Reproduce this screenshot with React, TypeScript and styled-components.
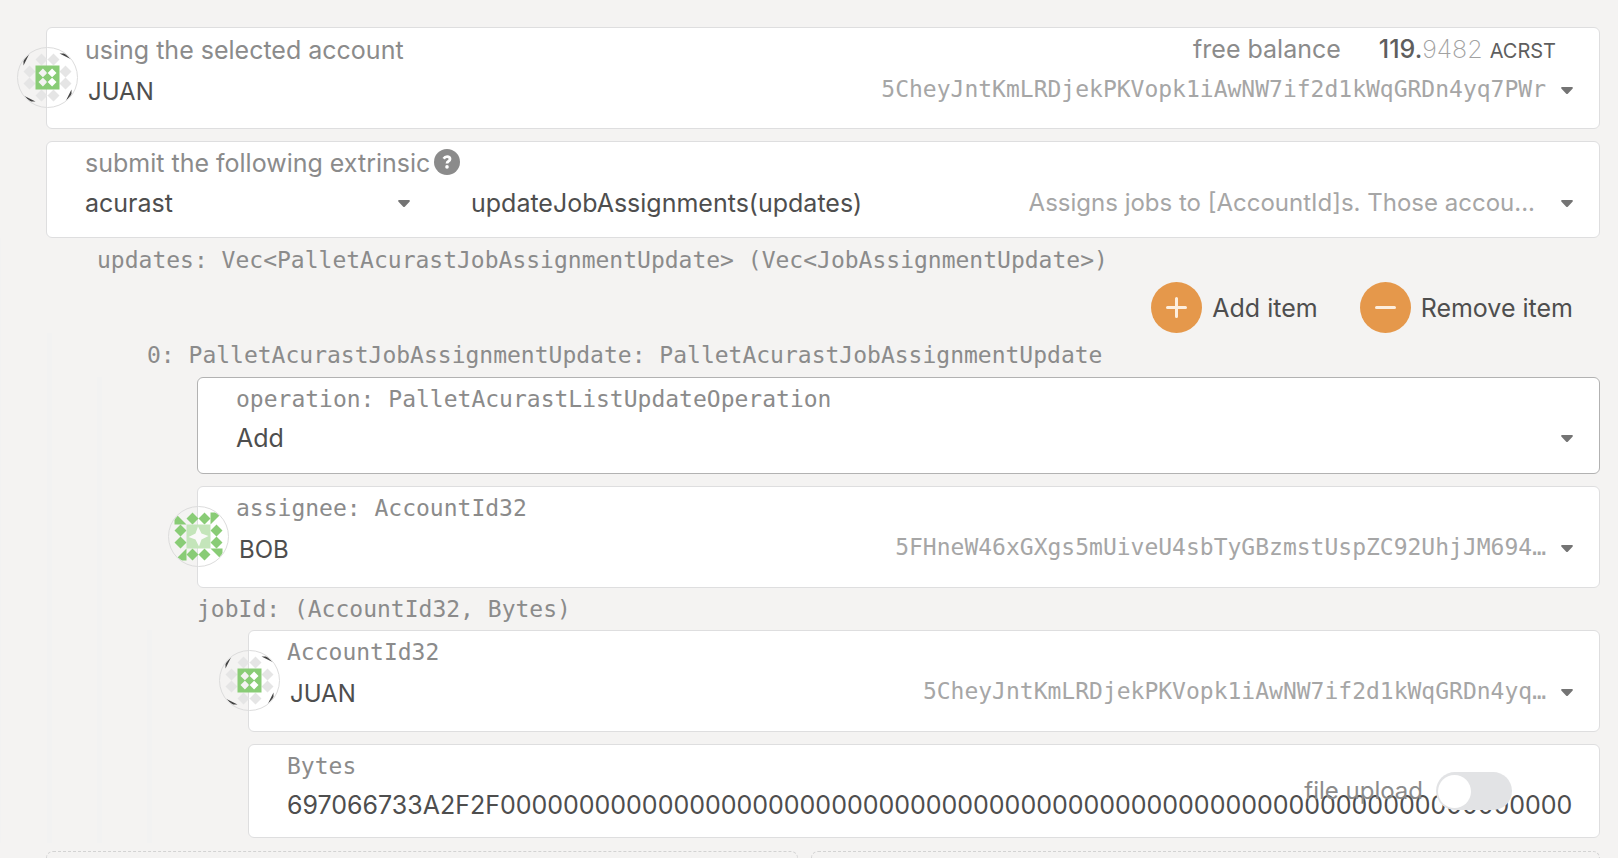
import React, { useState } from 'react';
import styled, { createGlobalStyle } from 'styled-components';

const SANS = `Inter, "Liberation Sans", sans-serif`;
const MONO = `"DejaVu Sans Mono", "Liberation Mono", monospace`;

const GlobalStyle = createGlobalStyle`
  *, *::before, *::after { box-sizing: border-box; }
  body {
    margin: 0;
    background: #f4f3f2;
    color: #4e4e4e;
    font: 400 25px/32px ${SANS};
  }
`;

const Page = styled.main`
  display: flex;
  flex-direction: column;
  min-height: 100vh;
  padding: 27px 18px 0 46px;
`;

const Stack = styled.div`
  display: flex;
  flex-direction: column;
  gap: 12px;
`;

const Nested = styled.section<{ $indent: number }>`
  position: relative;
  padding-left: ${p => p.$indent}px;
  &::before {
    content: '';
    position: absolute;
    top: 0;
    bottom: -5px;
    left: -50px;
    width: 5px;
    background: #f2f2f2;
  }
`;

const Card = styled.div<{ $height: number; $top?: number; $active?: boolean }>`
  position: relative;
  min-height: ${p => p.$height}px;
  padding: ${p => p.$top ?? 4}px 26px 0 38px;
  background: #fff;
  border: 1px solid ${p => (p.$active ? '#b2b2b2' : '#dededf')};
  border-radius: 6px;
`;

const CardHead = styled.div`
  display: flex;
  align-items: center;
  height: 34px;
  padding-right: 17px;
`;

const Label = styled.label<{ $mono?: boolean }>`
  color: #8b8b8b;
  white-space: nowrap;
  ${p => p.$mono && `font: 400 23px/32px ${MONO};`}
`;

const TypeLine = styled.div<{ $compact?: boolean }>`
  color: #8b8b8b;
  font: 400 23px/${p => (p.$compact ? 42 : 44)}px ${MONO};
  white-space: nowrap;
`;

const Balance = styled.div`
  display: flex;
  align-items: baseline;
  margin-left: auto;
  white-space: nowrap;
  color: #8b8b8b;
`;

const Amount = styled.span`
  margin-left: 38px;
  color: #5e5e5e;
  font-weight: 500;
`;

const Decimals = styled.span`
  color: #a2a2a2;
  font-weight: 200;
`;

const Unit = styled.span`
  margin-left: 7px;
  color: #5e5e5e;
  font-size: 20px;
`;

const Picker = styled.button<{ $width?: number; $short?: boolean }>`
  display: flex;
  align-items: center;
  flex: ${p => (p.$width ? `0 0 ${p.$width}px` : '1 1 0')};
  width: 100%;
  min-width: 0;
  height: ${p => (p.$short ? 44 : 46)}px;
  padding: 0;
  border: 0;
  background: none;
  color: inherit;
  font: inherit;
  text-align: left;
`;

const PickerRow = styled.div`
  display: flex;
  gap: 61px;
`;

const Name = styled.span`
  flex: 1;
  white-space: nowrap;
`;

const AccountName = styled(Name)`
  padding: 4px 0 0 3px;
  font-size: 24px;
`;

const Address = styled.span`
  margin-right: 15px;
  padding-bottom: 2px;
  color: #a6a6a6;
  font: 400 23px/32px ${MONO};
`;

const Description = styled.span`
  margin-right: 26px;
  color: #a6a6a6;
  font-size: 24px;
`;

const Caret = styled.svg`
  flex: none;
  width: 12px;
  height: 7px;
  fill: #747474;
`;

const Avatar = styled.svg`
  position: absolute;
  top: 19px;
  left: -30px;
  width: 61px;
  height: 61px;
`;

const Help = styled.svg`
  width: 26px;
  height: 26px;
  margin: 0 0 2px 4px;
`;

const Actions = styled.div`
  display: flex;
  justify-content: flex-end;
  gap: 42px;
  height: 51px;
  padding-right: 27px;
`;

const Action = styled.button`
  display: flex;
  align-items: center;
  gap: 10px;
  padding: 0;
  border: 0;
  background: none;
  color: #4e4e4e;
  font: inherit;
`;

const BytesInput = styled.input`
  display: block;
  width: 100%;
  height: 44px;
  padding: 0;
  border: 0;
  outline: 0;
  background: none;
  color: #4e4e4e;
  font: inherit;
`;

const Upload = styled.label`
  position: absolute;
  top: 27px;
  right: 87px;
  display: flex;
  align-items: center;
  gap: 13px;
  color: #8b8b8b;
  font-size: 24px;
`;

const Toggle = styled.input`
  appearance: none;
  display: flex;
  align-items: center;
  width: 76px;
  height: 38px;
  margin: 0;
  padding: 0 2px;
  border-radius: 19px;
  background: #e2e3e5;
  &::before {
    content: '';
    width: 33px;
    height: 33px;
    border-radius: 50%;
    background: #fff;
  }
  &:checked { justify-content: flex-end; }
`;

const Footer = styled.div`
  display: grid;
  flex: 1;
  grid-template-columns: 752fr 789fr;
  gap: 13px;
  margin-top: 13px;
`;

const Dashed = styled.div`
  border: 1px dashed #d3d3d3;
  border-bottom: 0;
  border-radius: 7px 7px 0 0;
`;

const DownCaret = () => (
  <Caret viewBox="0 0 12 7" aria-hidden="true">
    <path d="M1 0h10q1.400.500.500 1.700L7 6.400q-1 1-2 0L.500 1.700Q-.400.500 1 0z" />
  </Caret>
);

const RING = <circle cx="30.500" cy="30.500" r="30" fill="none" stroke="#dcdcdc" />;
const DIAMONDS = [[18, 6], [30, 6], [42, 18], [42, 30], [30, 42], [18, 42], [6, 30], [6, 18]];
const diamond = (x: number, y: number, r: number) => `M${x} ${y - r}l${r} ${r}l${-r} ${r}l${-r} ${-r}z`;
const sides = DIAMONDS.map(([x, y]) => diamond(x, y, 6)).join('');

const JuanIcon = () => (
  <Avatar viewBox="0 0 61 61" role="img" aria-label="JUAN">
    <clipPath id="disc"><circle cx="24" cy="24" r="29.400" /></clipPath>
    <g transform="translate(6.500 6.500)">
      <path d={sides} fill="#e5e5e5" />
      <g clipPath="url(#disc)" fill="#444">
        {[0, 90, 180, 270].map(a => (
          <path key={a} d="M36 0h12v6z" transform={`rotate(${a} 24 24)`} />
        ))}
      </g>
      <path
        fill="#89cc76"
        fillRule="evenodd"
        d={`M12 12h24v24h-24z${[[19.4, 19.4], [28.6, 19.4], [19.4, 28.6], [28.6, 28.6]].map(([x, y]) => diamond(x, y, 4.4)).join('')}`}
      />
    </g>
    {RING}
  </Avatar>
);

const BobIcon = () => (
  <Avatar viewBox="0 0 61 61" role="img" aria-label="BOB">
    <clipPath id="disc-bob"><circle cx="24" cy="24" r="29.400" /></clipPath>
    <g transform="translate(6.500 6.500)">
      <g clipPath="url(#disc-bob)" fill="#89cc76">
        <path d={sides} />
        {[0, 90, 180, 270].map(a => (
          <path key={a} d="M36 0h12l-12 12z" transform={`rotate(${a} 24 24)`} />
        ))}
      </g>
      <path fill="#c4e5ba" d="M12 12h24v24h-24z" />
      <path fill="#fafaf9" d="M23 14L28 20L34 23L28 28L25 34L20 28L14 25L20 20z" transform="rotate(0 24 24)" opacity="0" />
      <path fill="#fafaf9" d="M23.500 14L27 21L34 23.500L27 27L24.500 34L21 27L14 24.500L21 21z" />
    </g>
    {RING}
  </Avatar>
);

const HelpIcon = () => (
  <Help viewBox="0 0 26 26" role="img" aria-label="Help">
    <circle cx="13" cy="13" r="13" fill="#8b8b8b" />
    <path d="M9.700 9.700q1.200-2.100 3.400-2.100 2.900 0 2.900 2.500 0 1.300-1.500 2.100-1.500.800-1.500 2.400" fill="none" stroke="#fff" strokeWidth="2.800" />
    <circle cx="13" cy="17.900" r="1.800" fill="#fff" />
  </Help>
);

const RoundIcon = styled.svg`
  width: 51px;
  height: 51px;
  fill: none;
  stroke: #fdeedd;
  stroke-width: 3;
  stroke-linecap: round;
`;

const ActionIcon = ({ plus }: { plus?: boolean }) => (
  <RoundIcon viewBox="0 0 51 51" aria-hidden="true">
    <circle cx="25.500" cy="25.500" r="25.500" fill="#e5984b" stroke="none" />
    <path d={plus ? 'M16.500 25.500h18M25.500 16.500v18' : 'M16.500 25.500h18'} />
  </RoundIcon>
);

interface AccountProps {
  id: string;
  label: string;
  mono?: boolean;
  name: string;
  address: string;
  icon: React.ReactNode;
  children?: React.ReactNode;
}

const AccountCard = ({ id, label, mono, name, address, icon, children }: AccountProps) => (
  <Card $height={102} $top={mono ? 4 : 5}>
    {icon}
    <CardHead>
      <Label htmlFor={id} $mono={mono}>{label}</Label>
      {children}
    </CardHead>
    <Picker id={id} type="button">
      <AccountName>{name}</AccountName>
      <Address>{address}</Address>
      <DownCaret />
    </Picker>
  </Card>
);

export default function App() {
  const [bytes, setBytes] = useState('697066733A2F2F' + '0'.repeat(69));
  const [upload, setUpload] = useState(false);

  return (
    <>
      <GlobalStyle />
      <Page>
        <Stack>
          <AccountCard
            id="account"
            label="using the selected account"
            name="JUAN"
            address="5CheyJntKmLRDjekPKVopk1iAwNW7if2d1kWqGRDn4yq7PWr"
            icon={<JuanIcon />}
          >
            <Balance>
              free balance
              <Amount>119.</Amount>
              <Decimals>9482</Decimals>
              <Unit>ACRST</Unit>
            </Balance>
          </AccountCard>
          <Card $height={97}>
            <CardHead>
              <Label htmlFor="pallet">submit the following extrinsic</Label>
              <HelpIcon />
            </CardHead>
            <PickerRow>
              <Picker id="pallet" type="button" $width={325}>
                <Name>acurast</Name>
                <DownCaret />
              </Picker>
              <Picker type="button">
                <Name>updateJobAssignments(updates)</Name>
                <Description>Assigns jobs to [AccountId]s. Those accou...</Description>
                <DownCaret />
              </Picker>
            </PickerRow>
          </Card>
        </Stack>

        <Nested $indent={51}>
          <TypeLine>updates: Vec&lt;PalletAcurastJobAssignmentUpdate&gt; (Vec&lt;JobAssignmentUpdate&gt;)</TypeLine>
          <Actions>
            <Action type="button"><ActionIcon plus />Add item</Action>
            <Action type="button"><ActionIcon />Remove item</Action>
          </Actions>
          <Nested $indent={50}>
            <TypeLine>0: PalletAcurastJobAssignmentUpdate: PalletAcurastJobAssignmentUpdate</TypeLine>
            <Nested $indent={50}>
              <Stack>
                <Card $height={97} $active>
                  <CardHead>
                    <Label htmlFor="operation" $mono>operation: PalletAcurastListUpdateOperation</Label>
                  </CardHead>
                  <Picker id="operation" type="button" $short>
                    <Name>Add</Name>
                    <DownCaret />
                  </Picker>
                </Card>
                <AccountCard
                  id="assignee"
                  label="assignee: AccountId32"
                  mono
                  name="BOB"
                  address="5FHneW46xGXgs5mUiveU4sbTyGBzmstUspZC92UhjJM694…"
                  icon={<BobIcon />}
                />
              </Stack>
              <TypeLine $compact>jobId: (AccountId32, Bytes)</TypeLine>
              <Nested $indent={51}>
                <Stack>
                  <AccountCard
                    id="job-account"
                    label="AccountId32"
                    mono
                    name="JUAN"
                    address="5CheyJntKmLRDjekPKVopk1iAwNW7if2d1kWqGRDn4yq…"
                    icon={<JuanIcon />}
                  />
                  <Card $height={94}>
                    <CardHead>
                      <Label htmlFor="bytes" $mono>Bytes</Label>
                    </CardHead>
                    <BytesInput id="bytes" value={bytes} onChange={e => setBytes(e.target.value)} />
                    <Upload>
                      file upload
                      <Toggle type="checkbox" checked={upload} onChange={e => setUpload(e.target.checked)} />
                    </Upload>
                  </Card>
                </Stack>
              </Nested>
            </Nested>
          </Nested>
        </Nested>

        <Footer>
          <Dashed />
          <Dashed />
        </Footer>
      </Page>
    </>
  );
}
